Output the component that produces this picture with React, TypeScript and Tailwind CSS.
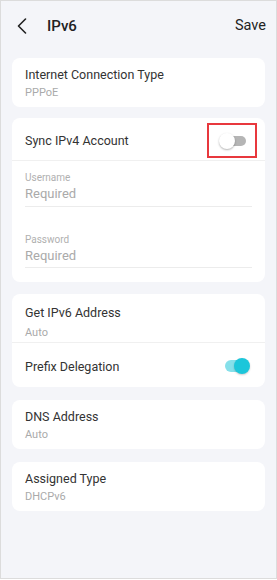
import React from "react";

function OffToggle() {
  return (
    <div className="relative w-[27px] h-[16px]">
      <div className="absolute left-[9px] top-[3px] w-[18px] h-[10px] rounded-full bg-[#b5b5b5]" />
      <div className="absolute left-0 top-0 w-[16px] h-[16px] rounded-full bg-white shadow-[0_1px_2px_rgba(0,0,0,0.3)]" />
    </div>
  );
}

function OnToggle() {
  return (
    <div className="relative w-[25px] h-[16px]">
      <div className="absolute left-0 top-[2px] w-[22px] h-[12px] rounded-full bg-[#86e0ea]" />
      <div className="absolute right-0 top-0 w-[16px] h-[16px] rounded-full bg-[#1cc6da] shadow-[0_1px_2px_rgba(0,0,0,0.2)]" />
    </div>
  );
}

function InfoCard({ title, value }: { title: string; value: string }) {
  return (
    <div className="bg-white rounded-[8px] pl-[13px] h-[49px] flex flex-col justify-center">
      <div className="text-[12.5px] leading-[17px] text-[#333]">{title}</div>
      <div className="text-[11px] leading-[14px] text-[#aaa] mt-[3px]">{value}</div>
    </div>
  );
}

export default function App() {
  return (
    <div
      className="w-[277px] h-[579px] bg-[#f4f5f9] border border-[#dcdcdc] flex flex-col"
      style={{ fontFamily: "Roboto, 'Noto Sans', sans-serif" }}
    >
      <div className="h-[57px] flex items-center px-[15px] pb-[7px]">
        <svg width="10" height="16" viewBox="0 0 10 16" className="ml-[1px]">
          <path d="M8.5 1 L1.5 8 L8.5 15" fill="none" stroke="#222" strokeWidth="1.6" strokeLinecap="round" strokeLinejoin="round" />
        </svg>
        <div className="ml-[20px] text-[15px] text-[#222] font-medium">IPv6</div>
        <div className="ml-auto text-[14.5px] text-[#222] mr-[-5px]">Save</div>
      </div>

      <div className="px-[11px] flex flex-col">
        <InfoCard title="Internet Connection Type" value="PPPoE" />

        <div className="bg-white rounded-[8px] mt-[11px] h-[164px] flex flex-col">
          <div className="h-[43px] pl-[13px] flex items-center border-b border-[#f0f0f0]">
            <div className="text-[12.5px] text-[#333] mt-[5px]">Sync IPv4 Account</div>
            <div className="ml-auto mr-[8px] mt-[3px] w-[50px] h-[35px] border-2 border-[#e8383d] flex items-center justify-center">
              <OffToggle />
            </div>
          </div>
          <div className="pl-[13px] pr-[13px] pt-[10px]">
            <div className="border-b border-[#ececec] pb-[3px]">
              <div className="text-[10px] leading-[13px] text-[#b0b0b0]">Username</div>
              <div className="text-[13px] leading-[18px] text-[#aaa] mt-[1px]">Required</div>
            </div>
            <div className="border-b border-[#ececec] pb-[2px] mt-[26px]">
              <div className="text-[10px] leading-[13px] text-[#b0b0b0]">Password</div>
              <div className="text-[13px] leading-[18px] text-[#aaa] mt-[1px]">Required</div>
            </div>
          </div>
        </div>

        <div className="bg-white rounded-[8px] mt-[12px] h-[93px] flex flex-col">
          <div className="h-[49px] pl-[13px] pt-[10px] flex flex-col border-b border-[#f0f0f0]">
            <div className="text-[12.5px] leading-[17px] text-[#333]">Get IPv6 Address</div>
            <div className="text-[11px] leading-[14px] text-[#aaa] mt-[5px]">Auto</div>
          </div>
          <div className="flex-1 pl-[13px] pr-[15px] flex items-center">
            <div className="text-[12.5px] text-[#333] mt-[5px]">Prefix Delegation</div>
            <div className="ml-auto mt-[2px]">
              <OnToggle />
            </div>
          </div>
        </div>

        <div className="mt-[13px]">
          <InfoCard title="DNS Address" value="Auto" />
        </div>
        <div className="mt-[13px]">
          <InfoCard title="Assigned Type" value="DHCPv6" />
        </div>
      </div>
    </div>
  );
}
